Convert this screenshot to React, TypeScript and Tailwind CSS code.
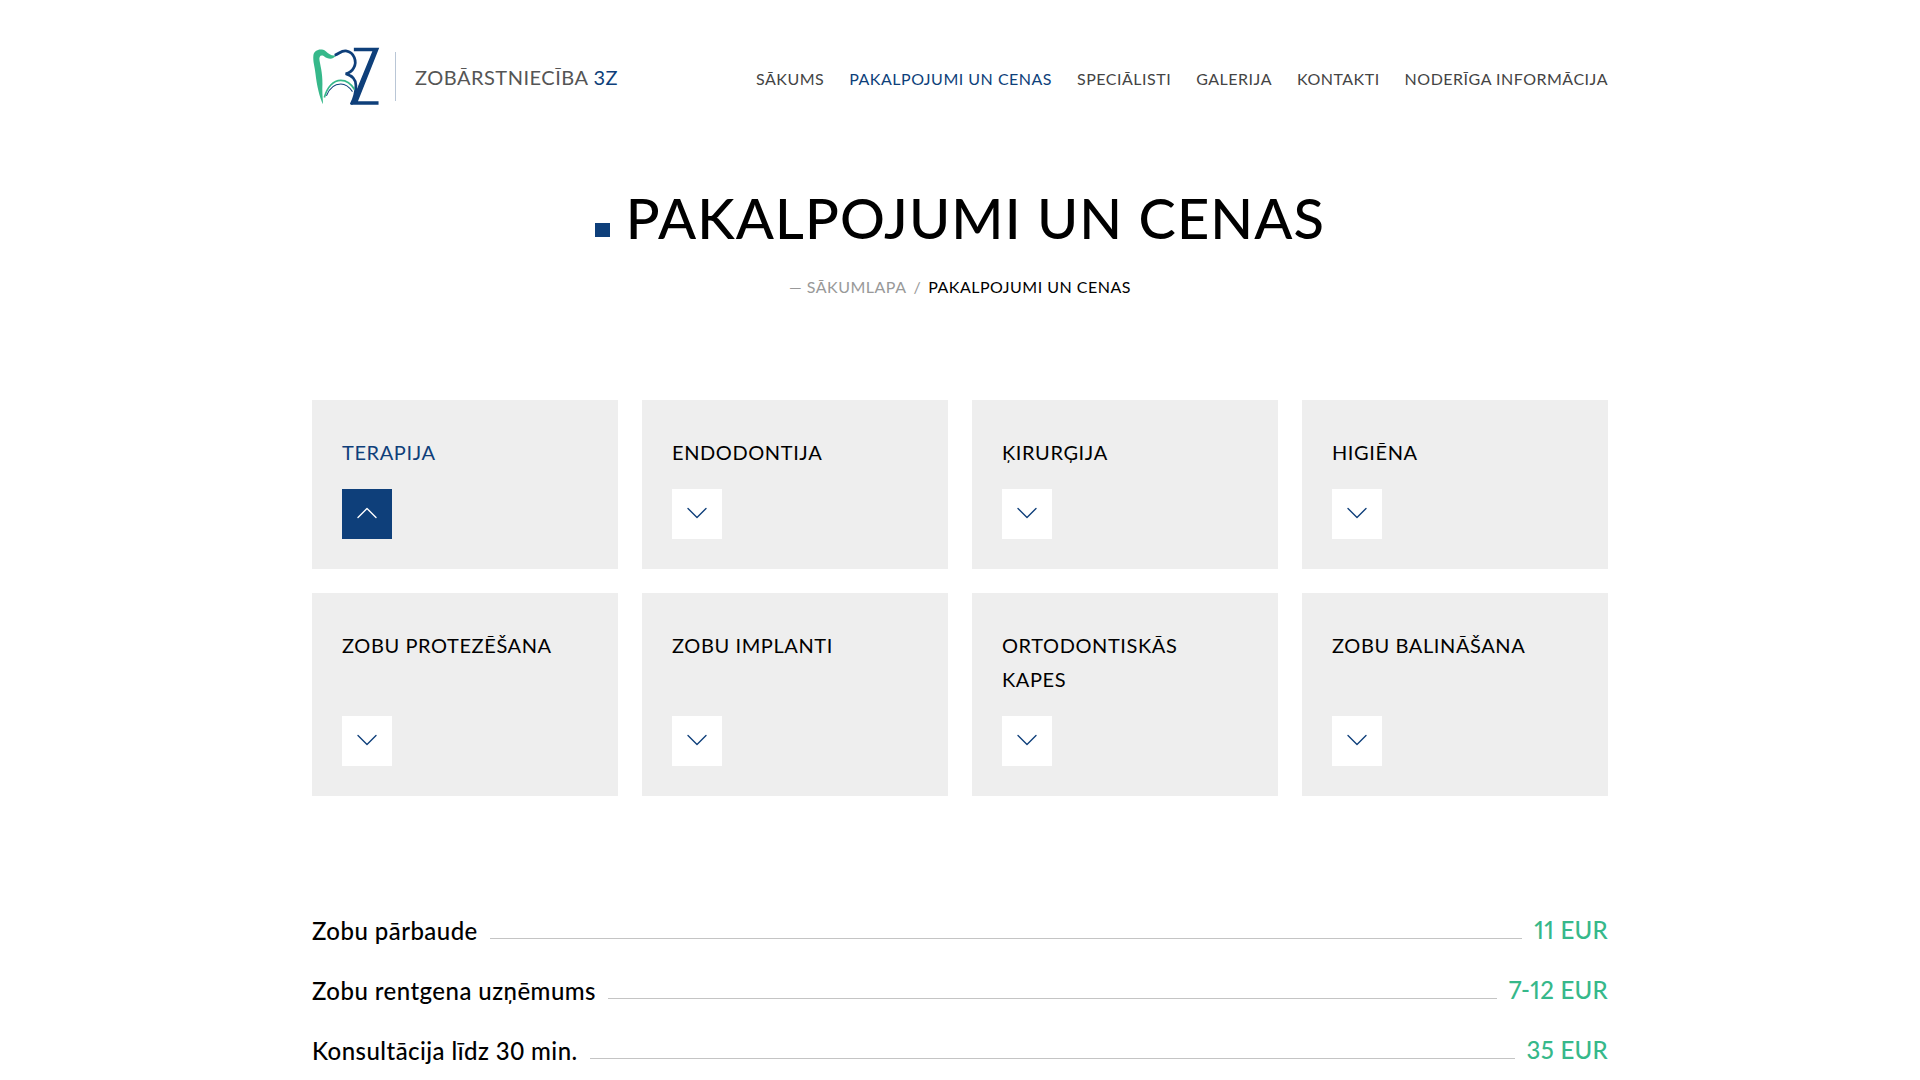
import { ChevronDown, ChevronUp } from "lucide-react";

const navItems = ["SĀKUMS", "PAKALPOJUMI UN CENAS", "SPECIĀLISTI", "GALERIJA", "KONTAKTI", "NODERĪGA INFORMĀCIJA"];

const services = [
  { title: "TERAPIJA", active: true },
  { title: "ENDODONTIJA" },
  { title: "ĶIRURĢIJA" },
  { title: "HIGIĒNA" },
  { title: "ZOBU PROTEZĒŠANA" },
  { title: "ZOBU IMPLANTI" },
  { title: "ORTODONTISKĀS KAPES" },
  { title: "ZOBU BALINĀŠANA" },
];

const prices = [
  { name: "Zobu pārbaude", price: "11 EUR" },
  { name: "Zobu rentgena uzņēmums", price: "7-12 EUR" },
  { name: "Konsultācija līdz 30 min.", price: "35 EUR" },
];

const Logo = () => (
  <svg width="70" height="60" viewBox="38 45 204 175" fill="none">
    <path d="M42 72C44 58 62 50 78 60C88 68 96 76 108 72C100 86 84 84 72 74C62 70 58 76 60 88C64 110 70 130 68 170C68 190 70 205 70 215C60 195 52 160 48 125C46 105 40 90 42 72Z" fill="#36b88a" />
    <path d="M104 72C118 68 124 56 140 60C160 64 170 90 160 108C154 120 146 124 136 126C150 130 166 140 166 160C166 180 160 200 152 215" stroke="#0e3f7a" strokeWidth="8" />
    <path d="M74 195C82 165 100 145 122 145C140 145 154 158 162 172" stroke="#36b88a" strokeWidth="5" />
    <path d="M80 190C88 170 102 156 122 156C136 156 146 164 156 178" stroke="#0e3f7a" strokeWidth="3" />
    <path d="M160 50H234L172 206H232V216H150L214 60H160Z" fill="#0e3f7a" />
  </svg>
);

const ServiceCard = ({ title, active }: { title: string; active?: boolean }) => (
  <div className="flex flex-col justify-between bg-[#eeeeee] px-[30px] pb-[30px] pt-[35px]">
    <h3 className={`max-w-[225px] text-[20px] leading-[34px] tracking-[0.6px] ${active ? "text-[#0e3f7a]" : "text-black"}`}>
      {title}
    </h3>
    <button
      className={`mt-[20px] flex h-[50px] w-[50px] items-center justify-center pb-[2px] ${active ? "bg-[#0e3f7a] text-white" : "bg-white text-[#0e3f7a]"}`}
    >
      {active ? <ChevronUp size={36} strokeWidth={0.9} /> : <ChevronDown size={36} strokeWidth={0.9} />}
    </button>
  </div>
);

const App = () => {
  return (
    <div className="h-screen overflow-hidden bg-white font-['Lato',sans-serif]">
      <div className="mx-auto w-[1296px]">
        <header className="flex h-[186px] items-start justify-between pt-[46px]">
          <div className="flex items-center">
            <Logo />
            <div className="ml-[13px] h-[49px] w-px bg-[#b9c6d6]" />
            <span className="ml-[19px] mt-[1px] text-[20px] tracking-[0.5px] text-[#555555]">
              ZOBĀRSTNIECĪBA <span className="text-[#0e3f7a]">3Z</span>
            </span>
          </div>
          <nav className="mt-[22px] flex gap-[25px] text-[16px] leading-[22px] tracking-[0.5px] text-[#444444]">
            {navItems.map((item) => (
              <a key={item} className={item === "PAKALPOJUMI UN CENAS" ? "text-[#0e3f7a]" : ""}>
                {item}
              </a>
            ))}
          </nav>
        </header>

        <div className="flex flex-col items-center">
          <h1 className="flex items-end text-[56px] font-medium leading-[64px] tracking-[1.1px] text-black">
            <span className="mb-[13px] mr-[16px] h-[14px] w-[15px] bg-[#0e3f7a]" />
            PAKALPOJUMI UN CENAS
          </h1>
          <div className="mt-[26px] flex items-center text-[16px] leading-[22px] tracking-[0.5px]">
            <span className="text-[#999999]">— SĀKUMLAPA</span>
            <span className="mx-[7px] text-[#999999]">/</span>
            <span className="text-black">PAKALPOJUMI UN CENAS</span>
          </div>
        </div>

        <div className="mt-[102px] grid grid-cols-4 gap-[24px]">
          {services.map((service) => (
            <ServiceCard key={service.title} {...service} />
          ))}
        </div>

        <div className="mt-[115px] flex flex-col gap-[24px]">
          {prices.map((row) => (
            <div key={row.name} className="flex h-[36px] items-end">
              <span className="-mb-[2px] text-[24px] font-medium leading-[36px] tracking-[0.45px] text-black">{row.name}</span>
              <span className="mx-[12px] mb-[8px] h-px flex-1 bg-[#c4c4c4]" />
              <span className="-mb-[1px] text-[24px] font-medium leading-[36px] tracking-[0.3px] text-[#36b88a] proportional-nums">{row.price}</span>
            </div>
          ))}
        </div>
      </div>
    </div>
  );
};

export default App;
